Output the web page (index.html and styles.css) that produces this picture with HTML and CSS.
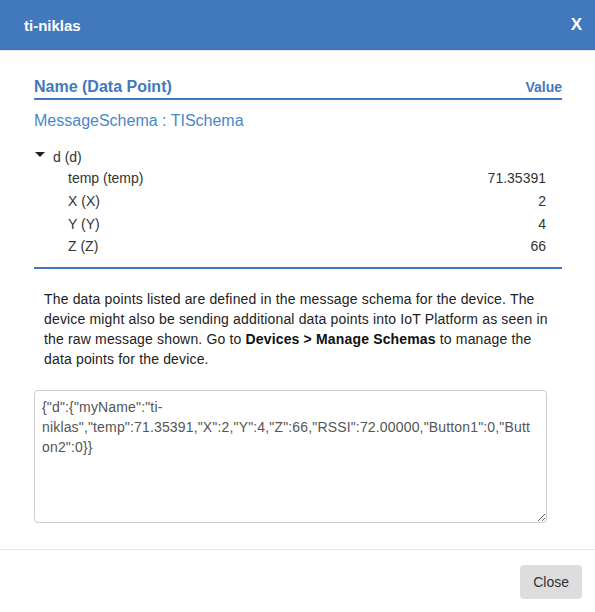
FILE: index.html
```html
<!DOCTYPE html>
<html>
<head>
<meta charset="utf-8">
<link rel="stylesheet" href="styles.css">
</head>
<body>
<div class="modal">
  <div class="modal-header">
    <span class="modal-title">ti-niklas</span>
    <span class="modal-close">X</span>
  </div>
  <div class="modal-body">
    <div class="table-head">
      <span class="th-name">Name (Data Point)</span>
      <span class="th-value">Value</span>
    </div>
    <div class="schema">MessageSchema : TISchema</div>
    <div class="tree">
      <div class="group"><span class="caret"></span><span>d (d)</span></div>
      <div class="row"><span>temp (temp)</span><span>71.35391</span></div>
      <div class="row"><span>X (X)</span><span>2</span></div>
      <div class="row"><span>Y (Y)</span><span>4</span></div>
      <div class="row"><span>Z (Z)</span><span>66</span></div>
    </div>
    <p class="note">The data points listed are defined in the message schema for the device. The device might also be sending additional data points into IoT Platform as seen in the raw message shown. Go to <b>Devices &gt; Manage Schemas</b> to manage the data points for the device.</p>
    <textarea class="raw">{"d":{"myName":"ti-niklas","temp":71.35391,"X":2,"Y":4,"Z":66,"RSSI":72.00000,"Button1":0,"Button2":0}}</textarea>
  </div>
  <div class="modal-footer">
    <button class="btn">Close</button>
  </div>
</div>
</body>
</html>
```
FILE: styles.css
```css
html, body {
  margin: 0;
  padding: 0;
  background: #fff;
}
body {
  font-family: "Liberation Sans", Arial, sans-serif;
  color: #333;
  font-size: 14px;
}
.modal {
  width: 595px;
  height: 612px;
  background: #fff;
}
.modal-header {
  height: 50px;
  background: #4178be;
  border-bottom: 1px solid #e5e5e5;
  display: flex;
  align-items: center;
  justify-content: space-between;
  padding: 0 13px 0 24px;
  color: #fff;
}
.modal-title {
  font-size: 15px;
  font-weight: bold;
}
.modal-close {
  font-size: 17px;
  font-weight: bold;
}
.modal-body {
  padding: 25px 33px 26px 34px;
}
.table-head {
  display: flex;
  justify-content: space-between;
  align-items: baseline;
  line-height: 22px;
  border-bottom: 2px solid #4178be;
  color: #4178be;
  font-weight: bold;
}
.th-name {
  font-size: 16px;
}
.th-value {
  font-size: 14px;
}
.schema {
  margin-top: 10px;
  font-size: 16px;
  line-height: 22px;
  color: #4a87c9;
}
.tree {
  margin-top: 16px;
  padding-bottom: 9px;
  border-bottom: 2px solid #4178be;
}
.group {
  display: flex;
  line-height: 19px;
  padding-left: 1px;
}
.caret {
  width: 0;
  height: 0;
  border-left: 5px solid transparent;
  border-right: 5px solid transparent;
  border-top: 5px solid #222;
  margin-top: 4px;
  margin-right: 8px;
}
.row {
  display: flex;
  justify-content: space-between;
  line-height: 22.8px;
  padding: 0 16px 0 34px;
}
.note {
  margin: 20px 10px 0 10px;
  line-height: 20px;
  font-size: 14px;
  letter-spacing: 0.16px;
  color: #222;
}
.note b {
  color: #111;
}
.raw {
  display: block;
  box-sizing: border-box;
  width: 513px;
  height: 133px;
  margin-top: 21px;
  padding: 6px 12px 6px 7px;
  border: 1px solid #ccc;
  border-radius: 4px;
  font-family: "Liberation Sans", Arial, sans-serif;
  font-size: 14px;
  letter-spacing: 0.16px;
  line-height: 20px;
  color: #555;
  resize: both;
  outline: none;
}
.modal-footer {
  border-top: 1px solid #e5e5e5;
  display: flex;
  justify-content: flex-end;
  padding: 15px 13px 13px 0;
}
.btn {
  height: 34px;
  padding: 0 13px;
  border: none;
  border-radius: 4px;
  background: #dddddd;
  color: #333;
  font-family: "Liberation Sans", Arial, sans-serif;
  font-size: 14px;
}
```
